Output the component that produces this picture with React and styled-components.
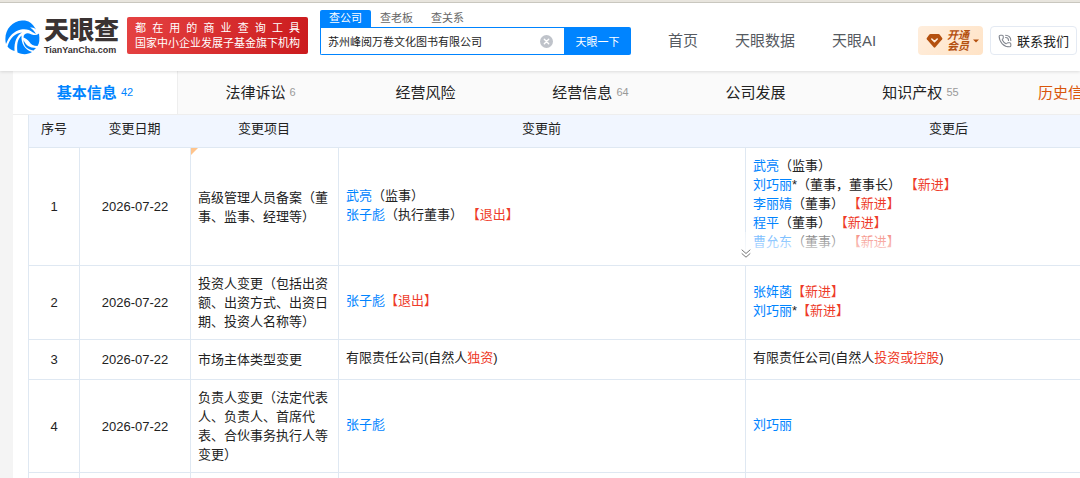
import styled, { createGlobalStyle } from 'styled-components';

const GlobalStyle = createGlobalStyle`
  *, *::before, *::after {
    box-sizing: border-box;
  }

  body {
    margin: 0;
    background: #f4f4f4;
    color: #222;
    font-family: "Liberation Sans", "Noto Sans CJK SC", sans-serif;
    font-size: 13px;
    line-height: 19px;
  }

  button, input {
    font-family: inherit;
    margin: 0;
  }

  a {
    text-decoration: none;
  }
`;

const Page = styled.div`
  height: 100vh;
  overflow: hidden;
  display: flex;
  flex-direction: column;
`;

/* ---------- header ---------- */

const Header = styled.header`
  position: relative;
  z-index: 1;
  display: flex;
  align-items: flex-start;
  padding: 8px 3px 15px 5px;
  background: #fff;
  border-top: 2px solid #e8e5de;
  box-shadow: inset 0 1px 0 #c9c7bf, 0 1px 3px rgba(0, 0, 0, 0.12);
`;

const Logo = styled.a`
  display: flex;
  align-items: center;
  gap: 4px;
  margin-top: 8px;
  color: #3a3333;
`;

const Wordmark = styled.span`
  display: flex;
  flex-direction: column;
  gap: 2px;
  font-weight: 700;
  white-space: nowrap;

  strong {
    font-size: 25px;
    line-height: 25px;
  }

  small {
    font-size: 9px;
    line-height: 11px;
  }
`;

const Slogan = styled.div`
  margin: 7px 11px 0 8px;
  padding: 4px 8px 3px;
  border-radius: 2px;
  background: linear-gradient(100deg, #e54242 0%, #cb1b1e 100%);
  color: #fff;
  font-size: 11px;
  line-height: 15px;
  white-space: nowrap;

  p {
    margin: 0;
  }

  p:first-child {
    text-align-last: justify;
  }
`;

const Search = styled.form`
  display: flex;
  flex-direction: column;
  width: 312px;
  padding-left: 1px;
`;

const SearchTabs = styled.div`
  display: flex;
`;

const SearchTab = styled.button`
  padding: 0 9px;
  border: 0;
  border-radius: 2px 2px 0 0;
  background: ${props => (props.$active ? '#0084ff' : 'transparent')};
  color: ${props => (props.$active ? '#fff' : '#666')};
  font-size: 11px;
  line-height: 17px;
`;

const SearchBar = styled.div`
  display: flex;
  height: 28px;
`;

const SearchField = styled.div`
  flex: 1;
  display: flex;
  align-items: center;
  padding: 0 11px 0 7px;
  border: 1px solid #0084ff;
  border-right: 0;
  border-radius: 0 0 0 2px;

  input {
    flex: 1;
    min-width: 0;
    padding: 0;
    border: 0;
    outline: 0;
    color: #222;
    font-size: 11px;
  }
`;

const IconButton = styled.button`
  display: flex;
  padding: 0;
  border: 0;
  background: transparent;
`;

const SearchButton = styled.button`
  width: 67px;
  padding: 0;
  border: 0;
  border-radius: 0 2px 2px 0;
  background: #0084ff;
  color: #fff;
  font-size: 11px;
`;

const Nav = styled.nav`
  display: flex;
  gap: 37px;
  margin: 21px 0 0 37px;

  a {
    color: #555a61;
    font-size: 15px;
    line-height: 20px;
    white-space: nowrap;
  }
`;

const Actions = styled.div`
  display: flex;
  gap: 7px;
  margin: 16px 0 0 auto;
`;

const VipButton = styled.button`
  display: flex;
  align-items: center;
  gap: 3px;
  height: 29px;
  padding: 0 4px 0 8px;
  border: 0;
  border-radius: 4px;
  background: linear-gradient(135deg, #ffeedd 0%, #ffe3c6 100%);
  color: #b4500f;
  font-size: 11px;
  font-style: italic;
  font-weight: 700;
  line-height: 11px;

  span {
    width: 24px;
  }
`;

const ContactButton = styled.button`
  display: flex;
  align-items: center;
  gap: 5px;
  height: 29px;
  padding: 0 7px;
  border: 1px solid #e4eaf3;
  border-radius: 4px;
  background: #fff;
  color: #222;
  font-size: 13px;
  white-space: nowrap;
`;

/* ---------- company sections ---------- */

const Card = styled.main`
  flex: 1;
  min-width: 1155px;
  margin: 0 13px;
  background: #fff;
`;

const SectionTabs = styled.nav`
  display: grid;
  grid-template-columns: repeat(7, 1fr);
  border-bottom: 1px solid #eee;
`;

const SectionTab = styled.a`
  display: flex;
  align-items: center;
  justify-content: ${props => (props.$history ? 'flex-start' : 'center')};
  gap: 4px;
  height: 43px;
  padding-left: ${props => (props.$history ? '35px' : '0')};
  border-right: ${props => (props.$active ? '1px solid #eee' : '0')};
  background: ${props => (props.$active ? '#fff' : '#fafafa')};
  color: ${props => (props.$active ? '#0084ff' : props.$history ? '#d9560b' : '#222')};
  font-size: 15px;
  font-weight: ${props => (props.$active ? 700 : 400)};
  white-space: nowrap;

  small {
    color: ${props => (props.$active ? '#0084ff' : '#999')};
    font-size: 11px;
    font-weight: 400;
  }
`;

const TableWrap = styled.div`
  padding: 0 15px;
`;

const ChangeTable = styled.table`
  width: 100%;
  table-layout: fixed;
  border-spacing: 0;
  border-right: 1px solid #dfe8f2;

  th, td {
    border-bottom: 1px solid #dfe8f2;
  }

  th {
    padding: 4px 0 9px;
    background: #f1f6ff;
    font-weight: 400;
  }

  th:first-child {
    border-left: 1px solid #dfe8f2;
  }
`;

const Col = styled.col`
  width: ${props => props.$width};
`;

const Cell = styled.td`
  position: relative;
  height: 40px;
  padding: ${props => (props.$folded ? '8px 7px 14px' : '8px 7px')};
  border-left: 1px solid #dfe8f2;
  text-align: ${props => (props.$center ? 'center' : 'left')};
`;

const CornerMark = styled.span`
  position: absolute;
  top: 0;
  left: 0;
  border-top: 7px solid #ffc48c;
  border-right: 7px solid transparent;
`;

const Change = styled.div`
  padding-bottom: ${props => (props.$folded ? '0' : '4px')};
  white-space: pre-wrap;

  a {
    color: #0084ff;
  }

  em {
    color: #ee3b2a;
    font-style: normal;
  }
`;

const Fold = styled.div`
  position: absolute;
  right: 0;
  bottom: 0;
  left: -100%;
  display: flex;
  align-items: flex-end;
  justify-content: center;
  height: 33px;
  padding-bottom: 7px;
  background: linear-gradient(rgba(255, 255, 255, 0.4), rgba(255, 255, 255, 0.7) 50%, #fff 75%);
`;

// before / after lines: name link, plain text, highlighted mark
const rows = [
  {
    item: '高级管理人员备案（董事、监事、经理等）',
    marked: true,
    before: [
      { name: '武亮', text: '（监事）' },
      { name: '张子彪', text: '（执行董事） ', mark: '【退出】' },
    ],
    after: [
      { name: '武亮', text: '（监事）' },
      { name: '刘巧丽', text: '*（董事，董事长） ', mark: '【新进】' },
      { name: '李丽婧', text: '（董事） ', mark: '【新进】' },
      { name: '程平', text: '（董事） ', mark: '【新进】' },
      { name: '曹允东', text: '（董事） ', mark: '【新进】' },
    ],
  },
  {
    item: '投资人变更（包括出资额、出资方式、出资日期、投资人名称等）',
    before: [{ name: '张子彪', mark: '【退出】' }],
    after: [
      { name: '张姩菡', mark: '【新进】' },
      { name: '刘巧丽', text: '*', mark: '【新进】' },
    ],
  },
  {
    item: '市场主体类型变更',
    before: [{ text: '有限责任公司(自然人', mark: '独资', tail: ')' }],
    after: [{ text: '有限责任公司(自然人', mark: '投资或控股', tail: ')' }],
  },
  {
    item: '负责人变更（法定代表人、负责人、首席代表、合伙事务执行人等变更）',
    before: [{ name: '张子彪' }],
    after: [{ name: '刘巧丽' }],
  },
];

const sections = [
  { label: '基本信息', count: 42, active: true },
  { label: '法律诉讼', count: 6 },
  { label: '经营风险' },
  { label: '经营信息', count: 64 },
  { label: '公司发展' },
  { label: '知识产权', count: 55 },
  { label: '历史信息', history: true },
];

function LogoIcon() {
  return (
    <svg width="35" height="35" viewBox="0 0 35 35" aria-hidden="true">
      <path d="M1 24C-2 12 6 1 17 .5c6-.3 10 2 14 9-2-2-4-2-6-2 3 2 5 4 6 7-1-1-2-2-3-2-3-3-8-4-12-3C9 11 4 16 1 24z" fill="#0084ff" />
      <path d="M2.500 26.500C5 18 10 13 17 12.500c-5 3-8 9-7.500 18.500-3-1-5.500-2.500-7-4.500z" fill="#0084ff" />
      <path d="M12.500 32.500c-1-8 0-13 4-17-.5 8 3 14 10.500 16.500-4 2.500-9 3-14.500.5z" fill="#0084ff" />
      <path d="M18.500 17.500c0-4 4-5 7-3.500 4 2 6 1 8.500-.5.8 6 .5 10-1.500 12.500-4 0-6.500-1.500-8-4-1.500-2.500-4-3.500-6-4.500z" fill="#0084ff" />
      <path d="M18.500 20c2 5 6 8 12.500 8l-2.500 2.500C22 29.500 18.500 26 18.500 20z" fill="#0084ff" />
    </svg>
  );
}

function ClearIcon() {
  return (
    <svg width="13" height="13" viewBox="0 0 13 13" aria-hidden="true">
      <circle cx="6.5" cy="6.5" r="6.5" fill="#bfc3ca" />
      <path d="M4.3 4.3l4.4 4.4M8.7 4.3L4.3 8.7" stroke="#fff" strokeWidth="1.4" strokeLinecap="round" />
    </svg>
  );
}

function DiamondIcon() {
  return (
    <svg width="17" height="16" viewBox="0 0 16 16" aria-hidden="true">
      <path d="M4 1h8q.7 0 1.100.5L15.700 5q.5.7 0 1.300l-6.900 8q-.8.9-1.600 0L.3 6.300Q-.2 5.700.3 5L2.900 1.500Q3.300 1 4 1z" fill="#b4500f" />
      <path d="M5.300 6L8 8.600 10.700 6" fill="none" stroke="#ffeedd" strokeWidth="1.600" strokeLinecap="round" strokeLinejoin="round" />
    </svg>
  );
}

function CaretIcon() {
  return (
    <svg width="6" height="4" viewBox="0 0 6 4" aria-hidden="true">
      <path d="M0 .5h6L3 3.500z" fill="#b4500f" />
    </svg>
  );
}

function PhoneIcon() {
  return (
    <svg width="14" height="14" viewBox="0 0 24 24" fill="none" stroke="#80858e" strokeWidth="1.800" strokeLinecap="round" strokeLinejoin="round" aria-hidden="true">
      <path d="M13 2a9 9 0 0 1 9 9M13 6a5 5 0 0 1 5 5" />
      <path d="M13.800 16.600a1 1 0 0 0 1.200-.3l.4-.5A2 2 0 0 1 17 15h3a2 2 0 0 1 2 2v3a2 2 0 0 1-2 2A18 18 0 0 1 2 4a2 2 0 0 1 2-2h3a2 2 0 0 1 2 2v3a2 2 0 0 1-.8 1.600l-.5.4a1 1 0 0 0-.3 1.200 14 14 0 0 0 6.400 6.400" />
    </svg>
  );
}

function ExpandIcon() {
  return (
    <svg width="10" height="9" viewBox="0 0 10 9" fill="none" stroke="#777" aria-hidden="true">
      <path d="M.7.7L5 4.500 9.300.7M.7 4.400L5 8.200l4.300-3.800" />
    </svg>
  );
}

function ChangeLines({ lines, folded }) {
  return (
    <Change $folded={folded}>
      {lines.map((line, index) => (
        <div key={index}>
          {line.name && <a href="#person">{line.name}</a>}
          {line.text}
          {line.mark && <em>{line.mark}</em>}
          {line.tail}
        </div>
      ))}
    </Change>
  );
}

export default function App() {
  return (
    <Page lang="zh-CN">
      <GlobalStyle />
      <Header>
        <Logo href="#home">
          <LogoIcon />
          <Wordmark>
            <strong>天眼查</strong>
            <small>TianYanCha.com</small>
          </Wordmark>
        </Logo>
        <Slogan>
          <p>都 在 用 的 商 业 查 询 工 具</p>
          <p>国家中小企业发展子基金旗下机构</p>
        </Slogan>
        <Search onSubmit={event => event.preventDefault()}>
          <SearchTabs>
            <SearchTab type="button" $active>查公司</SearchTab>
            <SearchTab type="button">查老板</SearchTab>
            <SearchTab type="button">查关系</SearchTab>
          </SearchTabs>
          <SearchBar>
            <SearchField>
              <input type="text" aria-label="查公司" defaultValue="苏州峰阅万卷文化图书有限公司" />
              <IconButton type="button" aria-label="清空">
                <ClearIcon />
              </IconButton>
            </SearchField>
            <SearchButton type="submit">天眼一下</SearchButton>
          </SearchBar>
        </Search>
        <Nav>
          <a href="#index">首页</a>
          <a href="#data">天眼数据</a>
          <a href="#ai">天眼AI</a>
        </Nav>
        <Actions>
          <VipButton type="button">
            <DiamondIcon />
            <span>开通会员</span>
            <CaretIcon />
          </VipButton>
          <ContactButton type="button">
            <PhoneIcon />
            联系我们
          </ContactButton>
        </Actions>
      </Header>

      <Card>
        <SectionTabs>
          {sections.map(section => (
            <SectionTab
              key={section.label}
              href={`#${section.label}`}
              $active={section.active}
              $history={section.history}
            >
              {section.label}
              {section.count && <small>{section.count}</small>}
            </SectionTab>
          ))}
        </SectionTabs>

        <TableWrap>
          <ChangeTable>
            <colgroup>
              <Col $width="51px" />
              <Col $width="111px" />
              <Col $width="148px" />
              <Col />
              <Col />
            </colgroup>
            <thead>
              <tr>
                <th>序号</th>
                <th>变更日期</th>
                <th>变更项目</th>
                <th>变更前</th>
                <th>变更后</th>
              </tr>
            </thead>
            <tbody>
              {rows.map((row, index) => {
                const folded = row.after.length > 4;
                return (
                  <tr key={row.item}>
                    <Cell $center>{index + 1}</Cell>
                    <Cell $center>2026-07-22</Cell>
                    <Cell>
                      {row.marked && <CornerMark />}
                      {row.item}
                    </Cell>
                    <Cell>
                      <ChangeLines lines={row.before} />
                    </Cell>
                    <Cell $folded={folded}>
                      <ChangeLines lines={row.after} folded={folded} />
                      {folded && (
                        <Fold>
                          <IconButton type="button" aria-label="展开">
                            <ExpandIcon />
                          </IconButton>
                        </Fold>
                      )}
                    </Cell>
                  </tr>
                );
              })}
              <tr>
                <Cell />
                <Cell />
                <Cell />
                <Cell />
                <Cell />
              </tr>
            </tbody>
          </ChangeTable>
        </TableWrap>
      </Card>
    </Page>
  );
}
